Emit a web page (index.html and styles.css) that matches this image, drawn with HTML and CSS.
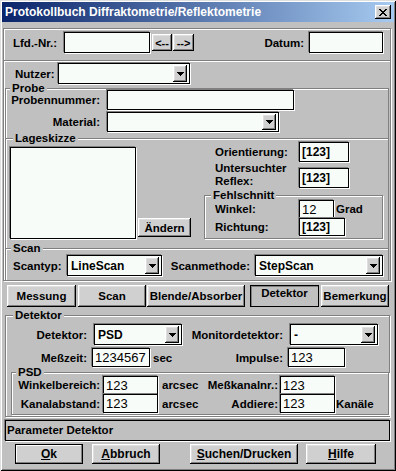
FILE: index.html
```html
<!DOCTYPE html>
<html lang="de">
<head>
<meta charset="utf-8">
<title>Protokollbuch Diffraktometrie/Reflektometrie</title>
<link rel="stylesheet" href="styles.css">
</head>
<body>
<div class="win">
  <div class="titlebar">
    <span class="title-text">Protokollbuch Diffraktometrie/Reflektometrie</span>
    <span class="close raised"><svg width="8" height="7" viewBox="0 0 8 7" shape-rendering="crispEdges"><path d="M0 0h2v1H0z M6 0h2v1H6z M1 1h2v1H1z M5 1h2v1H5z M2 2h4v1H2z M3 3h2v1H3z M2 4h4v1H2z M1 5h2v1H1z M5 5h2v1H5z M0 6h2v1H0z M6 6h2v1H6z" fill="#000"/></svg></span>
  </div>

  <div class="panel p-top">
    <span class="lbl w-lfd">Lfd.-Nr.:</span>
    <span class="field f-lfd"></span>
    <span class="btn raised b-prev">&lt;--</span>
    <span class="btn raised b-next">--&gt;</span>
    <span class="lbl l-datum">Datum:</span>
    <span class="field f-datum"></span>
  </div>

  <div class="panel p-main">
    <div class="row r-nutzer">
      <span class="lbl w-nutzer">Nutzer:</span>
      <span class="field combo c-nutzer"><span class="val"></span><span class="arrow raised"><svg width="7" height="4" viewBox="0 0 7 4" shape-rendering="crispEdges"><path d="M0 0h7v1H0z M1 1h5v1H1z M2 2h3v1H2z M3 3h1v1H3z"/></svg></span></span>
    </div>

    <div class="grp g-probe">
      <div class="legend lg-probe"><span>Probe</span></div>
      <div class="pgrid">
        <span class="lbl rt">Probennummer:</span>
        <span class="field f-pnr"></span>
        <span class="lbl rt">Material:</span>
        <span class="field combo c-mat"><span class="val"></span><span class="arrow raised"><svg width="7" height="4" viewBox="0 0 7 4" shape-rendering="crispEdges"><path d="M0 0h7v1H0z M1 1h5v1H1z M2 2h3v1H2z M3 3h1v1H3z"/></svg></span></span>
      </div>
    </div>

    <div class="grp g-lage">
      <div class="legend lg-lage"><span>Lageskizze</span></div>
      <div class="lage-row">
        <div class="field sketch"></div>
        <span class="btn raised b-aendern">Ändern</span>
        <div class="lage-right">
          <div class="lr-row">
            <span class="lbl w-lr">Orientierung:</span>
            <span class="field f-sm"><span class="val t-b">[123]</span></span>
          </div>
          <div class="lr-row r-reflex">
            <span class="lbl w-lr two">Untersuchter<br>Reflex:</span>
            <span class="field f-sm"><span class="val t-b">[123]</span></span>
          </div>
          <div class="grp g-fehl">
            <div class="legend lg-fehl"><span>Fehlschnitt</span></div>
            <div class="fs-row fs-first">
              <span class="lbl w-lr">Winkel:</span>
              <span class="field f-winkel"><span class="val t-num">12</span></span>
              <span class="lbl unit-grad">Grad</span>
            </div>
            <div class="fs-row">
              <span class="lbl w-lr">Richtung:</span>
              <span class="field f-richt"><span class="val t-b">[123]</span></span>
            </div>
          </div>
        </div>
      </div>
    </div>

    <div class="grp g-scan">
      <div class="legend lg-scan"><span>Scan</span></div>
      <div class="row scan-row">
        <span class="lbl w-scantyp">Scantyp:</span>
        <span class="field combo c-scantyp"><span class="val t-b">LineScan</span><span class="arrow raised"><svg width="7" height="4" viewBox="0 0 7 4" shape-rendering="crispEdges"><path d="M0 0h7v1H0z M1 1h5v1H1z M2 2h3v1H2z M3 3h1v1H3z"/></svg></span></span>
        <span class="lbl rt w-scanm">Scanmethode:</span>
        <span class="field combo c-scanm"><span class="val t-b">StepScan</span><span class="arrow raised"><svg width="7" height="4" viewBox="0 0 7 4" shape-rendering="crispEdges"><path d="M0 0h7v1H0z M1 1h5v1H1z M2 2h3v1H2z M3 3h1v1H3z"/></svg></span></span>
      </div>
    </div>
  </div>

  <div class="tabs">
    <span class="btn raised tab t-mess">Messung</span>
    <span class="btn raised tab t-scan">Scan</span>
    <span class="btn raised tab t-blende">Blende/Absorber</span>
    <span class="btn tab tab-on t-det">Detektor</span>
    <span class="btn raised tab t-bem">Bemerkung</span>
  </div>

  <div class="grp g-det">
    <div class="legend lg-det"><span>Detektor</span></div>
    <div class="row d-row1">
      <span class="lbl rt w-det">Detektor:</span>
      <span class="field combo c-det"><span class="val t-b">PSD</span><span class="arrow raised"><svg width="7" height="4" viewBox="0 0 7 4" shape-rendering="crispEdges"><path d="M0 0h7v1H0z M1 1h5v1H1z M2 2h3v1H2z M3 3h1v1H3z"/></svg></span></span>
      <span class="lbl rt w-mon">Monitordetektor:</span>
      <span class="field combo c-mon"><span class="val t-b">-</span><span class="arrow raised"><svg width="7" height="4" viewBox="0 0 7 4" shape-rendering="crispEdges"><path d="M0 0h7v1H0z M1 1h5v1H1z M2 2h3v1H2z M3 3h1v1H3z"/></svg></span></span>
    </div>
    <div class="row d-row2">
      <span class="lbl rt w-det">Meßzeit:</span>
      <span class="field f-mess"><span class="val t-num">1234567</span></span>
      <span class="lbl unit-sec">sec</span>
      <span class="lbl rt w-imp">Impulse:</span>
      <span class="field f-imp"><span class="val t-num">123</span></span>
    </div>
    <div class="grp g-psd">
      <div class="legend lg-psd"><span>PSD</span></div>
      <div class="row psd-row r1">
        <span class="lbl rt w-psdl">Winkelbereich:</span>
        <span class="field f-psd"><span class="val t-num">123</span></span>
        <span class="lbl unit-arc">arcsec</span>
        <span class="lbl rt w-psdr">Meßkanalnr.:</span>
        <span class="field f-psd2"><span class="val t-num">123</span></span>
      </div>
      <div class="row psd-row r2">
        <span class="lbl rt w-psdl">Kanalabstand:</span>
        <span class="field f-psd"><span class="val t-num">123</span></span>
        <span class="lbl unit-arc">arcsec</span>
        <span class="lbl rt w-psdr">Addiere:</span>
        <span class="field f-psd2"><span class="val t-num">123</span></span>
        <span class="lbl unit-kan">Kanäle</span>
      </div>
    </div>
  </div>

  <div class="status">Parameter Detektor</div>

  <div class="buttons">
    <span class="btn default b-ok"><u>O</u>k</span>
    <span class="btn raised b-abbruch"><u>A</u>bbruch</span>
    <span class="btn raised b-suchen"><u>S</u>uchen/Drucken</span>
    <span class="btn raised b-hilfe"><u>H</u>ilfe</span>
  </div>
</div>
</body>
</html>
```

FILE: styles.css
```css
* { box-sizing: border-box; }
html, body { margin: 0; padding: 0; }
body {
  width: 396px;
  height: 471px;
  overflow: hidden;
  background: #c0c0c0;
  font-family: "Liberation Sans", Arial, sans-serif;
  color: #000;
}

.win {
  width: 396px;
  height: 471px;
  padding: 2px;
  background: #c0c0c0;
  box-shadow: inset 1px 1px #dfdfdf, inset -1px -1px #000, inset 2px 2px #fff, inset -2px -2px #808080;
  display: flex;
  flex-direction: column;
  align-items: flex-start;
}

/* title bar */
.titlebar {
  width: 100%;
  height: 20px;
  display: flex;
  align-items: center;
  padding-left: 3px;
  background: linear-gradient(to right, #0a246a, #a6caf0);
}
.title-text {
  flex: 1;
  color: #fff;
  font-weight: bold;
  font-size: 12px;
  white-space: nowrap;
}
.close {
  width: 16px;
  height: 14px;
  margin-right: 3px;
  display: flex;
  align-items: center;
  justify-content: center;
}

/* bevels */
.raised {
  background: #d0d0d0;
  box-shadow: inset -1px -1px #000, inset 1px 1px #fff, inset -2px -2px #808080, inset 2px 2px #dfdfdf;
}
.default {
  background: #d0d0d0;
  box-shadow: inset 0 0 0 1px #000, inset -2px -2px #808080, inset 2px 2px #fff;
}
.field {
  display: flex;
  align-items: center;
  background: #f8fcf8;
  border: 1px solid #000;
  box-shadow: -1px -1px 0 #808080, 1px 1px 0 #fff;
  overflow: hidden;
}
.panel {
  margin-left: 1px;
  width: 388px;
  border: 1px solid #808080;
  box-shadow: inset 1px 1px #fff, 1px 1px #fff;
}
.grp {
  border: 1px solid #808080;
  border-bottom: 0;
  box-shadow: inset 1px 1px #fff;
  margin: 0 1px;
}
.legend {
  height: 13px;
  line-height: 13px;
  margin-top: -7px;
  margin-bottom: -6px;
  white-space: nowrap;
  font-weight: bold;
  font-size: 11.5px;
}
.legend span {
  background: #c0c0c0;
  padding: 0 2px;
}

/* text */
.lbl {
  font-weight: bold;
  font-size: 11.5px;
  white-space: nowrap;
  flex: none;
}
.rt { text-align: right; }
.val {
  flex: 1;
  padding-left: 2px;
  white-space: nowrap;
}
.t-num { font-size: 13px; }
.t-b { font-size: 12px; font-weight: bold; }

.btn {
  display: flex;
  align-items: center;
  justify-content: center;
  font-weight: bold;
  font-size: 11.5px;
  white-space: nowrap;
  flex: none;
}

.row { display: flex; align-items: center; }

.combo .val { padding-left: 3px; }
.arrow {
  width: 14px;
  align-self: stretch;
  margin: 1px 2px 1px 0;
  display: flex;
  align-items: center;
  justify-content: center;
  flex: none;
}

/* top panel */
.p-top {
  margin-top: 6px;
  height: 33px;
  display: flex;
  align-items: center;
  padding: 2px 0 6px 9px;
}
.w-lfd { width: 51px; }
.f-lfd { width: 86px; height: 21px; }
.b-prev { width: 20px; height: 17px; margin-left: 2px; font-size: 11px; }
.b-next { width: 21px; height: 17px; margin-left: 1px; font-size: 11px; }
.l-datum { margin-left: auto; margin-right: 5px; }
.f-datum { width: 74px; height: 21px; margin-right: 7px; }

/* main panel */
.p-main {
  border-top: 0;
  height: 220px;
  padding-top: 2px;
}
.r-nutzer { height: 21px; padding-left: 11px; }
.w-nutzer { width: 43px; }
.c-nutzer { width: 132px; height: 21px; }

.g-probe { margin-top: 4px; padding: 0 0 6px; }
.lg-probe { margin-left: 4px; }
.pgrid {
  margin-top: 1px;
  display: grid;
  grid-template-columns: 94px 187px;
  column-gap: 7px;
  row-gap: 2px;
  align-items: center;
}
.f-pnr { width: 187px; height: 20px; }
.c-mat { width: 172px; height: 20px; }

.g-lage { padding: 0 0 9px 4px; }
.lg-lage { margin-left: 3px; }
.lage-row { display: flex; align-items: flex-start; }
.sketch { width: 126px; height: 92px; margin-top: 8px; flex: none; }
.b-aendern {
  width: 53px;
  height: 19px;
  margin-left: 2px;
  margin-bottom: 2px;
  align-self: flex-end;
}
.lage-right { margin-left: 13px; width: 179px; padding-top: 3px; flex: none; }
.lr-row { display: flex; align-items: center; padding-left: 11px; }
.w-lr { width: 84px; }
.two { line-height: 13px; }
.r-reflex { align-items: flex-end; }
.f-sm { width: 50px; height: 20px; }

.g-fehl {
  margin: 7px 0 0 0;
  height: 44px;
  border-bottom: 1px solid #808080;
  box-shadow: inset 1px 1px #fff, 1px 1px #fff;
  padding: 0 0 0 10px;
}
.lg-fehl { margin-left: -4px; }
.fs-first { margin-top: 4px; }
.fs-row { display: flex; align-items: center; height: 18px; }
.f-winkel { width: 35px; height: 18px; }
.f-richt { width: 46px; height: 18px; }
.unit-grad { margin-left: 2px; }

.g-scan { padding: 0 0 4px 7px; }
.lg-scan { margin-left: -2px; }
.scan-row { height: 21px; margin-top: 6px; }
.w-scantyp { width: 54px; }
.c-scantyp { width: 95px; height: 21px; }
.w-scanm { width: 88px; }
.c-scanm { width: 128px; height: 21px; margin-left: 5px; }

/* tabs */
.tabs { display: flex; margin-top: 4px; height: 22px; }
.tab { height: 22px; }
.tab-on {
  background: #c0c0c0;
  box-shadow: inset 0 0 0 1px #000, inset 2px 2px #808080;
  padding-bottom: 6px;
}
.t-mess { width: 69px; margin-left: 5px; }
.t-scan { width: 68px; margin-left: 2px; }
.t-blende { width: 98px; margin-left: 1px; }
.t-det { width: 69px; margin-left: 5px; }
.t-bem { width: 68px; margin-left: 2px; }

/* detector group */
.g-det {
  margin: 8px 0 0 3px;
  width: 385px;
  border-bottom: 1px solid #808080;
  box-shadow: inset 1px 1px #fff, 1px 1px #fff;
  padding-bottom: 1px;
}
.lg-det { margin-left: 7px; }
.d-row1 { margin-top: 8px; height: 21px; }
.w-det { width: 81px; }
.c-det { width: 88px; height: 21px; margin-left: 7px; }
.w-mon { width: 101px; }
.c-mon { width: 88px; height: 21px; margin-left: 7px; }
.d-row2 { margin-top: 3px; height: 19px; }
.f-mess { width: 58px; height: 19px; margin-left: 5px; }
.unit-sec { width: 20px; margin-left: 3px; }
.w-imp { width: 110px; }
.f-imp { width: 57px; height: 19px; margin-left: 5px; }

.g-psd {
  margin: 5px 0 0 5px;
  border-bottom: 1px solid #808080;
  box-shadow: inset 1px 1px #fff, 1px 1px #fff;
  padding: 0 0 1px 0;
}
.lg-psd { margin-left: 4px; }
.psd-row.r1 { height: 18px; margin-top: 3px; }
.psd-row.r2 { height: 19px; }
.w-psdl { width: 88px; }
.f-psd { width: 55px; height: 100%; margin-left: 3px; }
.unit-arc { width: 40px; margin-left: 4px; }
.w-psdr { width: 76px; }
.f-psd2 { width: 55px; height: 100%; margin-left: 2px; }
.unit-kan { margin-left: 1px; }

/* status */
.status {
  margin: 3px 0 0 3px;
  width: 385px;
  height: 21px;
  border: 1px solid #000;
  box-shadow: -1px -1px 0 #808080, 1px 1px 0 #fff;
  padding-left: 1px;
  line-height: 19px;
  font-weight: bold;
  font-size: 11.5px;
  white-space: nowrap;
}

/* bottom buttons */
.buttons { display: flex; margin-top: 3px; height: 20px; }
.buttons .btn { height: 20px; font-size: 12px; }
.b-ok { width: 68px; margin-left: 13px; }
.b-abbruch { width: 68px; margin-left: 9px; }
.b-suchen { width: 108px; margin-left: 30px; }
.b-hilfe { width: 70px; margin-left: 8px; }
```
